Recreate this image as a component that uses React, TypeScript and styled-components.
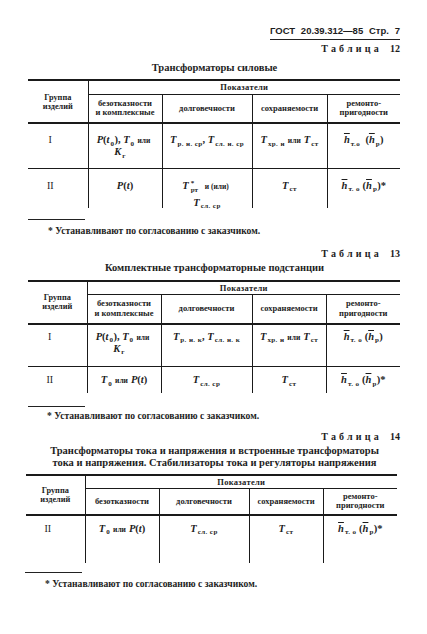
import React from 'react';
import styled, { createGlobalStyle } from 'styled-components';

const Global = createGlobalStyle`
  html, body { margin: 0; padding: 0; background: #fff; }
  body { font-family: "Liberation Serif", "DejaVu Serif", serif; color: #1d1d1d; }
`;

const Page = styled.div`
  width: 427px;
  height: 634px;
  display: flex;
  flex-direction: column;
  overflow: hidden;
  background: #fff;
`;

const RunningHead = styled.div`
  align-self: flex-end;
  margin: 25px 27px 0 0;
  width: 130px;
  display: flex;
  justify-content: space-between;
  font-family: "Liberation Sans", Arial, sans-serif;
  font-weight: bold;
  font-size: 9.5px;
  line-height: 12px;
  padding-bottom: 2px;
  border-bottom: 1.6px solid #222;
`;

const TableLabel = styled.div<{ $mt: number }>`
  align-self: flex-end;
  margin: ${p => p.$mt}px 27px 0 0;
  font-weight: bold;
  font-size: 10px;
  line-height: 12px;
  display: flex;
  gap: 8px;
`;

const Spaced = styled.span`
  letter-spacing: 3.2px;
`;

const Title = styled.div<{ $mt: number }>`
  margin-top: ${p => p.$mt}px;
  text-align: center;
  font-weight: bold;
  font-size: 10.5px;
  line-height: 12px;
  padding-left: 2px;
`;

const Table = styled.table<{ $mt: number; $left: number; $width: number }>`
  margin: ${p => p.$mt}px 0 0 ${p => p.$left}px;
  width: ${p => p.$width}px;
  border-collapse: collapse;
  table-layout: fixed;
  border-top: 2px solid #1a1a1a;
`;

const Col = styled.col<{ $w: number }>`
  width: ${p => p.$w}px;
`;

const HeadRow = styled.tr<{ $h: number }>`
  height: ${p => p.$h}px;
`;

const GroupHead = styled.th`
  border-right: 1.2px solid #1a1a1a;
  border-bottom: 2px solid #1a1a1a;
  font-size: 8.3px;
  font-weight: bold;
  line-height: 9px;
  padding: 0;
  text-align: center;
  vertical-align: middle;
`;

const IndexHead = styled.th`
  border-bottom: 1.2px solid #1a1a1a;
  font-size: 8.5px;
  font-weight: bold;
  letter-spacing: 0.3px;
  line-height: 10px;
  padding: 0;
  text-align: center;
  vertical-align: middle;
`;

const SubHead = styled.th`
  border-right: 1.2px solid #1a1a1a;
  border-bottom: 2px solid #1a1a1a;
  font-size: 8.5px;
  font-weight: bold;
  line-height: 9.5px;
  padding: 0 1px;
  text-align: center;
  vertical-align: middle;
  &:last-child { border-right: none; }
`;

const DataRow = styled.tr<{ $h: number; $pt: number }>`
  height: ${p => p.$h}px;
  & > td { padding-top: ${p => p.$pt}px; }
  &:last-child > td { border-bottom: none; }
`;

const Cell = styled.td`
  border-right: 1.3px solid #1a1a1a;
  border-bottom: 1.3px solid #1a1a1a;
  padding: 0 1px;
  text-align: center;
  vertical-align: top;
  font-size: 10.5px;
  font-weight: bold;
  line-height: 11px;
  white-space: nowrap;
  &:last-child { border-right: none; }
`;

const GroupCell = styled(Cell)`
  font-weight: normal;
  font-size: 10px;
  padding-right: 16px;
`;

const Line = styled.div<{ $indent?: number; $mt?: number }>`
  padding-right: ${p => p.$indent ?? 0}px;
  margin-top: ${p => p.$mt ?? 0}px;
`;

const V = styled.i`
  font-style: italic;
`;

const H = styled.i`
  font-style: italic;
  text-decoration: overline;
  text-decoration-thickness: 1px;
`;

const Sb = styled.span`
  font-size: 7px;
  font-style: normal;
  letter-spacing: 0.4px;
  line-height: 0;
  vertical-align: -2.5px;
  margin-left: 1px;
`;

const Stack = styled.span`
  display: inline-block;
  vertical-align: -3px;
  font-size: 7px;
  line-height: 7px;
  text-align: left;
  margin-left: 2px;
`;

const Word = styled.span`
  font-size: 7.5px;
  margin: 0 3px;
`;

const FootRule = styled.div<{ $mt: number; $left: number }>`
  margin: ${p => p.$mt}px 0 0 ${p => p.$left}px;
  width: 57px;
  border-top: 1.2px solid #222;
`;

const Footnote = styled.div<{ $mt: number; $left: number }>`
  margin: ${p => p.$mt}px 0 0 ${p => p.$left}px;
  font-weight: bold;
  font-size: 9.6px;
  line-height: 12px;
`;

const PT0 = () => (<><V>P</V>(<V>t</V><Sb>0</Sb>), <V>T</V><Sb>0</Sb><Word>или</Word></>);
const HCell = ({ star }: { star?: boolean }) => (
  <><H>h</H><Sb>т. о</Sb> (<H>h</H><Sb>р</Sb>){star ? '*' : ''}</>
);

const Header = ({ single }: { single?: boolean }) => (
  <>
    <HeadRow $h={14}>
      <GroupHead rowSpan={2}>Группа<br />изделий</GroupHead>
      <IndexHead colSpan={4}>Показатели</IndexHead>
    </HeadRow>
    <HeadRow $h={single ? 26 : 29}>
      <SubHead>{single ? 'безотказности' : <>безотказности<br />и комплексные</>}</SubHead>
      <SubHead>долговечности</SubHead>
      <SubHead>сохраняемости</SubHead>
      <SubHead>ремонто-<br />пригодности</SubHead>
    </HeadRow>
  </>
);

const FOOT = '* Устанавливают по согласованию с заказчиком.';

export default function App() {
  return (
    <Page>
      <Global />
      <RunningHead><span>ГОСТ</span><span>20.39.312—85</span><span>Стр.</span><span>7</span></RunningHead>

      <TableLabel $mt={3}><Spaced>Таблица</Spaced><span>12</span></TableLabel>
      <Title $mt={7}>Трансформаторы силовые</Title>
      <Table $mt={5} $left={28} $width={372}>
        <colgroup><Col $w={60} /><Col $w={74} /><Col $w={90} /><Col $w={75} /><Col $w={73} /></colgroup>
        <thead><Header /></thead>
        <tbody>
          <DataRow $h={45} $pt={10}>
            <GroupCell>I</GroupCell>
            <Cell><Line><PT0 /></Line><Line $indent={10}><V>K</V><Sb>г</Sb></Line></Cell>
            <Cell><V>T</V><Sb>р. н. ср</Sb>, <V>T</V><Sb>сл. н. ср</Sb></Cell>
            <Cell><V>T</V><Sb>хр. н</Sb><Word>или</Word><V>T</V><Sb>ст</Sb></Cell>
            <Cell><H>h</H><Sb>т.о</Sb>&nbsp;&nbsp;(<H>h</H><Sb>р</Sb>)</Cell>
          </DataRow>
          <DataRow $h={39} $pt={11}>
            <GroupCell>II</GroupCell>
            <Cell><V>P</V>(<V>t</V>)</Cell>
            <Cell>
              <Line><V>T</V><Stack>*<br />рт</Stack><Word>&nbsp;&nbsp;и (или)</Word></Line>
              <Line $mt={3}><V>T</V><Sb>сл. ср</Sb></Line>
            </Cell>
            <Cell><V>T</V><Sb>ст</Sb></Cell>
            <Cell><HCell star /></Cell>
          </DataRow>
        </tbody>
      </Table>
      <FootRule $mt={11} $left={28} />
      <Footnote $mt={5} $left={48}>{FOOT}</Footnote>

      <TableLabel $mt={11}><Spaced>Таблица</Spaced><span>13</span></TableLabel>
      <Title $mt={2}>Комплектные трансформаторные подстанции</Title>
      <Table $mt={6} $left={28} $width={372}>
        <colgroup><Col $w={59} /><Col $w={74} /><Col $w={91} /><Col $w={74} /><Col $w={74} /></colgroup>
        <thead><Header /></thead>
        <tbody>
          <DataRow $h={43} $pt={6}>
            <GroupCell>I</GroupCell>
            <Cell><Line><PT0 /></Line><Line $indent={10}><V>K</V><Sb>г</Sb></Line></Cell>
            <Cell><V>T</V><Sb>р. н. к</Sb>, <V>T</V><Sb>сл. н. к</Sb></Cell>
            <Cell><V>T</V><Sb>хр. н</Sb><Word>или</Word><V>T</V><Sb>ст</Sb></Cell>
            <Cell><HCell /></Cell>
          </DataRow>
          <DataRow $h={26} $pt={7}>
            <GroupCell>II</GroupCell>
            <Cell><V>T</V><Sb>0</Sb><Word>или</Word><V>P</V>(<V>t</V>)</Cell>
            <Cell><V>T</V><Sb>сл. ср</Sb></Cell>
            <Cell><V>T</V><Sb>ст</Sb></Cell>
            <Cell><HCell star /></Cell>
          </DataRow>
        </tbody>
      </Table>
      <FootRule $mt={13} $left={28} />
      <Footnote $mt={3} $left={47}>{FOOT}</Footnote>

      <TableLabel $mt={9}><Spaced>Таблица</Spaced><span>14</span></TableLabel>
      <Title $mt={2}>Трансформаторы тока и напряжения и встроенные трансформаторы<br />тока и напряжения. Стабилизаторы тока и регуляторы напряжения</Title>
      <Table $mt={5} $left={26} $width={371}>
        <colgroup><Col $w={59} /><Col $w={74} /><Col $w={90} /><Col $w={74} /><Col $w={74} /></colgroup>
        <thead><Header single /></thead>
        <tbody>
          <DataRow $h={48} $pt={7}>
            <GroupCell>II</GroupCell>
            <Cell><V>T</V><Sb>0</Sb><Word>или</Word><V>P</V>(<V>t</V>)</Cell>
            <Cell><V>T</V><Sb>сл. ср</Sb></Cell>
            <Cell><V>T</V><Sb>ст</Sb></Cell>
            <Cell><HCell star /></Cell>
          </DataRow>
        </tbody>
      </Table>
      <FootRule $mt={9} $left={25} />
      <Footnote $mt={5} $left={45}>{FOOT}</Footnote>
    </Page>
  );
}
